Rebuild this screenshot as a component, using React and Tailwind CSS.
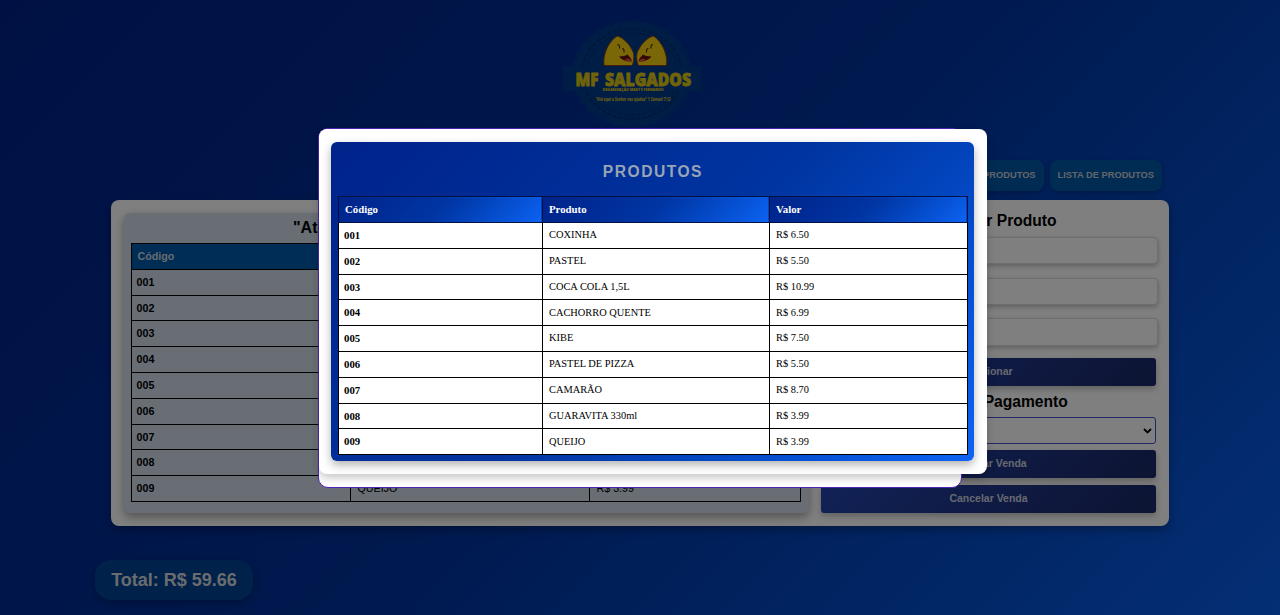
import React from "react";

const products = [
  ["001", "COXINHA", "R$ 6.50"],
  ["002", "PASTEL", "R$ 5.50"],
  ["003", "COCA COLA 1,5L", "R$ 10.99"],
  ["004", "CACHORRO QUENTE", "R$ 6.99"],
  ["005", "KIBE", "R$ 7.50"],
  ["006", "PASTEL DE PIZZA", "R$ 5.50"],
  ["007", "CAMARÃO", "R$ 8.70"],
  ["008", "GUARAVITA 330ml", "R$ 3.99"],
  ["009", "QUEIJO", "R$ 3.99"],
];

function Pastry() {
  return (
    <g>
      <path
        d="M43 45.5 C41.5 35 47 22 56 16 C62 17 69.5 25 72.5 33 C73.5 38 72.5 43 71 45.5 Z"
        fill="#f2cf10"
        stroke="#8a3a10"
        strokeWidth="1"
      />
      <path d="M58 36.5 C62 36.5 65 35.5 66.5 34.5 C69 37 71.5 40 70.5 41.5 C66 42 61 40.5 58 36.5 Z" fill="#6a1010" />
      <path d="M63.5 40 C65.5 38 68.5 38.5 70.5 40.5 L69.5 42 Z" fill="#e05040" />
      <path
        d="M56.5 24.5 q2.5 0 2 4 M61 28.5 q2.5 0 2 4"
        stroke="#4a2800"
        strokeWidth="1.1"
        fill="none"
      />
    </g>
  );
}

function Logo() {
  return (
    <svg width="142" height="108" viewBox="0 0 142 108" className="block">
      <ellipse cx="71" cy="54" rx="58" ry="52" fill="#003a8c" stroke="#003a8c" strokeWidth="3" strokeDasharray="7 3" />
      <ellipse cx="71" cy="54" rx="50" ry="45" fill="none" stroke="#002f78" strokeWidth="2" strokeDasharray="4 2" />
      <ellipse cx="71" cy="54" rx="46" ry="41" fill="none" stroke="#002f78" strokeWidth="1" />
      <path d="M2 46 H140 V71 H2 Z" fill="#003a8c" />
      <Pastry />
      <g transform="translate(148.5 0) scale(-1 1)">
        <Pastry />
      </g>
      <g fill="#e0c810" textAnchor="middle" fontFamily="Open Sans, sans-serif">
        <text x="26" y="65.8" fontSize="17" fontWeight="800" stroke="#e0c810" strokeWidth="0.8" strokeLinejoin="round" textLength="23" lengthAdjust="spacingAndGlyphs">
          MF
        </text>
        <text x="87" y="65.8" fontSize="17" fontWeight="800" stroke="#e0c810" strokeWidth="0.8" strokeLinejoin="round" textLength="86" lengthAdjust="spacingAndGlyphs">
          SALGADOS
        </text>
        <text x="72" y="71.3" fontSize="4" fontWeight="800" textLength="61" lengthAdjust="spacingAndGlyphs">
          ORGANIZAÇÃO MARY E FERNANDO
        </text>
        <text x="72" y="80.5" fontSize="4.3" fontWeight="700" fontStyle="italic" textLength="75" lengthAdjust="spacingAndGlyphs">
          "Até aqui o Senhor nos ajudou" 1 Samuel 7:12
        </text>
      </g>
    </svg>
  );
}

function SalesTable() {
  return (
    <table className="ml-[0.5px] w-[670.5px] table-fixed border-collapse text-left text-[10.7px] leading-none">
      <colgroup>
        <col className="w-[219.5px]" />
        <col className="w-[239px]" />
        <col />
      </colgroup>
      <thead>
        <tr className="h-[25.8px] bg-[#005aac] text-[#d0d8e0]">
          {["Código", "Produto", "Valor"].map((h) => (
            <th key={h} className="border border-black p-0 pl-[6px] font-bold">{h}</th>
          ))}
        </tr>
      </thead>
      <tbody>
        {products.map(([code, name, price]) => (
          <tr key={code} className="h-[25.8px]">
            <td className="border border-black p-0 pl-[5px] font-bold">{code}</td>
            <td className="border border-black p-0 pl-[6.5px]">{name}</td>
            <td className="border border-black p-0 pl-[6.5px]">{price}</td>
          </tr>
        ))}
      </tbody>
    </table>
  );
}

function ActionButton({ children }) {
  return (
    <button className="block h-[27.9px] w-full rounded-[3px] bg-linear-135 from-[#2344ae] to-[#1a2866] text-[10.5px] font-bold text-[#ccd2e0] shadow-[0_3px_6px_rgba(0,0,0,0.25)]">
      {children}
    </button>
  );
}

function Field() {
  return (
    <input
      type="text"
      className="block h-[27.4px] w-[337px] rounded-[4px] border border-[#dadada] bg-white shadow-[0_2px_5px_rgba(0,0,0,0.25)]"
    />
  );
}

function ProductsDialog() {
  return (
    <div className="absolute left-[318px] top-[128px] h-[360px] w-[644px] rounded-[10px] border border-[#4a25b5] bg-white">
      <div className="h-[345.4px] w-[668.4px] rounded-[8px] bg-white p-[12.4px] pt-[12.8px] shadow-[0_4px_8px_rgba(0,0,0,0.22)]">
        <section className="h-[319.5px] w-[643px] rounded-[6px] bg-linear-135 from-[#00238a] from-0% via-[#0034a0] via-50% to-[#0d63f3] px-[6.6px] shadow-[0_4px_10px_rgba(0,0,0,0.3)]">
          <h2 className="flex h-[54.4px] items-center justify-center pt-[5px] text-[15.6px] font-bold tracking-[1.5px] text-[#99a4b4]">
            PRODUTOS
          </h2>
          <table className="w-[630px] table-fixed border-collapse bg-white text-left font-['Liberation_Serif',serif] text-[10.4px] leading-none text-black">
            <colgroup>
              <col className="w-[204px]" />
              <col className="w-[227px]" />
              <col />
            </colgroup>
            <thead>
              <tr className="h-[25.8px] text-[10.8px] text-white">
                {["Código", "Produto", "Valor"].map((h) => (
                  <th key={h} className="border border-[#001040] bg-linear-135 from-[#00238a] from-0% via-[#0035a3] via-50% to-[#0d63f3] p-0 pb-px pl-[6px] font-bold">
                    {h}
                  </th>
                ))}
              </tr>
            </thead>
            <tbody>
              {products.map(([code, name, price]) => (
                <tr key={code} className="h-[25.8px]">
                  <td className="border border-black p-0 pl-[5px] text-[10.8px] font-bold">{code}</td>
                  <td className="border border-black p-0 pl-[6px]">{name}</td>
                  <td className="border border-black p-0 pl-[6px]">{price}</td>
                </tr>
              ))}
            </tbody>
          </table>
        </section>
      </div>
    </div>
  );
}

export default function App() {
  return (
    <div className="relative h-[615px] w-[1280px] overflow-hidden bg-linear-135 from-[#002188] from-0% via-[#00329c] via-50% to-[#0a60ee] to-102% font-['Liberation_Sans',sans-serif] text-black">
      <header className="flex h-[160px] justify-center pr-4 pt-5">
        <Logo />
      </header>
      <nav className="flex h-10 justify-end gap-1.5 pr-[118px]">
        {["CADASTRO DE PRODUTOS", "LISTA DE PRODUTOS"].map((label) => (
          <button
            key={label}
            className="h-[31px] rounded-[8px] bg-[#005aa4]/90 px-2 text-[9.3px] font-bold text-[#c4ccd6] shadow-[0_2px_5px_rgba(0,0,0,0.25)]"
          >
            {label}
          </button>
        ))}
      </nav>

      <main className="ml-[111px] flex h-[326px] w-[1058px] gap-3 rounded-[8px] bg-white p-[13px] shadow-[0_4px_10px_rgba(0,0,0,0.3)]">
        <section className="h-[300px] w-[685px] shrink-0 rounded-[6px] bg-[#d0dce8] pl-1.5 shadow-[0_4px_10px_rgba(0,0,0,0.35)]">
          <h2 className="flex h-[30px] items-center pl-[163px] text-[16px] font-bold">"Atendimento com Qualidade"</h2>
          <SalesTable />
        </section>
        <section className="flex w-[335px] flex-col">
          <h2 className="h-6 text-center text-[15.6px] font-bold leading-[16px]">Adicionar Produto</h2>
          <div className="flex flex-col gap-[13.3px]">
            <Field />
            <Field />
            <Field />
          </div>
          <div className="mt-[12.6px]">
            <ActionButton>Adicionar</ActionButton>
          </div>
          <h2 className="flex h-[30.7px] items-center justify-center text-[15.6px] font-bold">Forma de Pagamento</h2>
          <div className="flex h-[27.4px] shrink-0 items-center justify-end rounded-[3px] border border-[#3d50c8] bg-white pr-[3px]">
            <svg width="9" height="6" viewBox="0 0 9 6" fill="none" stroke="black" strokeWidth="1.8">
              <path d="M1 1 L4.5 4.5 L8 1" />
            </svg>
          </div>
          <div className="mt-1.5 flex flex-col gap-[6.5px]">
            <ActionButton>Finalizar Venda</ActionButton>
            <ActionButton>Cancelar Venda</ActionButton>
          </div>
        </section>
      </main>

      <footer className="ml-[95px] mt-[34px] flex h-10 w-[158px] items-center justify-center rounded-[16px] bg-[#004c90]/70 text-[18px] font-bold text-[#d4d8de] shadow-[0_3px_8px_rgba(0,0,0,0.25)]">
        Total: R$ 59.66
      </footer>

      <div className="absolute inset-0 bg-black/50" />
      <ProductsDialog />
    </div>
  );
}
